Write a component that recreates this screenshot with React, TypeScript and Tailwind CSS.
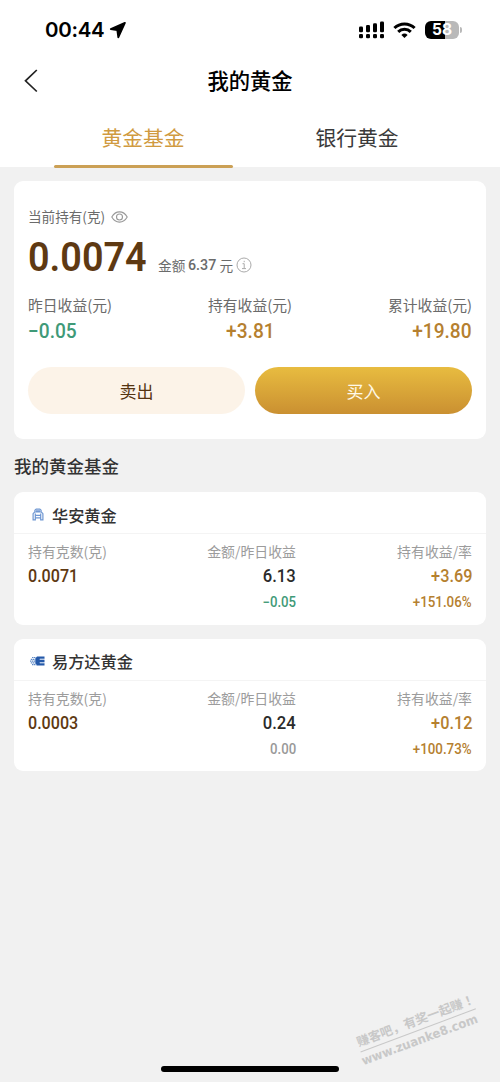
import type { ReactNode } from 'react';

const NUM = "font-['Roboto','Noto_Sans_CJK_SC',sans-serif]";

function StatusBar() {
  return (
    <div className="flex h-[60px] items-center pl-[45px] pr-[38px] text-black">
      <span className="font-['Inter',sans-serif] text-[20.5px] font-semibold leading-none tracking-[-0.3px]">00:44</span>
      <svg className="ml-[5px] h-[18px] w-[18px]" viewBox="0 0 18 18">
        <path d="M15.900 1.800 1.800 8.100 8.300 9.200l1 7.200z" fill="#000" stroke="#000" strokeWidth="1.800" strokeLinejoin="round" />
      </svg>
      <div className="ml-auto flex items-center">
        <svg className="h-[18px] w-[27px]" viewBox="0 0 27 18">
          <rect x="1" y="5.600" width="4" height="5.600" rx="1.300" />
          <rect x="8" y="4" width="4" height="7.200" rx="1.300" />
          <rect x="15" y="2.300" width="4" height="8.900" rx="1.300" />
          <rect x="22" y="0.500" width="4" height="10.700" rx="1.300" />
          <rect x="1" y="13" width="4" height="4.200" rx="1.300" />
          <rect x="8" y="13" width="4" height="4.200" rx="1.300" />
          <rect x="15" y="13" width="4" height="4.200" rx="1.300" />
          <rect x="22" y="13" width="4" height="4.200" rx="1.300" />
        </svg>
        <svg className="ml-2 h-[17px] w-[23px]" viewBox="0 0 23 17" fill="none" stroke="#000" strokeWidth="3">
          <path d="M1.400 6a14.500 14.500 0 0 1 20.200 0" />
          <path d="M5.200 9.900a9 9 0 0 1 12.600 0" />
          <path d="m11.500 16-3.100-3.100a4.500 4.500 0 0 1 6.200 0z" fill="#000" stroke="none" />
        </svg>
        <div className="ml-[9px] flex h-[18px] w-[34px] items-center justify-center rounded-[6px] bg-[linear-gradient(90deg,#000_58%,#b9b9b9_58%)] font-['Inter',sans-serif] text-[15.5px] font-bold leading-none text-white">
          58
        </div>
        <div className="ml-px h-[6px] w-[2px] rounded-r-full bg-[#b9b9b9]" />
      </div>
    </div>
  );
}

function Label({ children, className = '' }: { children: ReactNode; className?: string }) {
  return <div className={`whitespace-nowrap ${className}`}>{children}</div>;
}

function Stat({ label, value, align, color }: { label: string; value: string; align: string; color: string }) {
  return (
    <div className={`flex flex-col ${align}`}>
      <Label className="text-[14.8px] leading-[24px] text-[#6b6b6b]">{label}</Label>
      <div className={`${NUM} scale-x-[0.92] pt-px text-[20.8px] font-medium leading-[27px] ${color}`}>{value}</div>
    </div>
  );
}

function HuaAnLogo() {
  return (
    <svg className="h-[13px] w-[12px]" viewBox="0 0 12 13" fill="none" stroke="#6f97d2" strokeWidth="1.200">
      <path d="M2.900 4V2.300L4.200 1.100h3.600l1.300 1.200V4M4.600 4V2.800h2.800V4M2.600 4h6.800l1.500 1.700v6.200H8.700V9.800H3.300v2.100H1.100V5.700zM3.300 5.500v4.300M8.700 5.500v4.300M3.300 7.300h5.400" />
    </svg>
  );
}

function EFundLogo() {
  return (
    <svg className="h-[10px] w-[15px]" viewBox="0 0 15 10">
      <path d="M7 .5h7.500v2.300H9.800v1.100h4.700v2.200H9.800v1.100h4.700v2.300H7L5.300 7.300V2.500z" fill="#2459a9" />
      <path d="M9.800 3.300h4.700M9.800 6.700h4.700" stroke="#8eabd8" strokeWidth=".8" />
      <path d="M2 1.500h4M.8 3.300h5M0 5.100h6M.8 6.900h5M2 8.700h5" stroke="#5d89c6" strokeWidth="1.200" strokeDasharray="1.400 .5" />
    </svg>
  );
}

interface Fund {
  name: string;
  logo: ReactNode;
  grams: string;
  amount: string;
  daily: string;
  dailyColor: string;
  gain: string;
  rate: string;
}

const funds: Fund[] = [
  { name: '华安黄金', logo: <HuaAnLogo />, grams: '0.0071', amount: '6.13', daily: '−0.05', dailyColor: 'text-[#3f9a78]', gain: '+3.69', rate: '+151.06%' },
  { name: '易方达黄金', logo: <EFundLogo />, grams: '0.0003', amount: '0.24', daily: '0.00', dailyColor: 'text-[#999]', gain: '+0.12', rate: '+100.73%' },
];

function ColumnLabel({ children }: { children: ReactNode }) {
  return (
    <Label className="font-['Noto_Sans_CJK_SC',sans-serif] text-[13.900px] font-normal leading-[22px] text-[#9c9c9c]">{children}</Label>
  );
}

function FundCard({ fund }: { fund: Fund }) {
  return (
    <section className="h-[132.500px] rounded-[9px] bg-white">
      <div className="flex h-[42px] items-center border-b border-[#f4f4f4] pl-[14px] pt-[4px]">
        <div className="flex w-[19px] justify-center">{fund.logo}</div>
        <h3 className="ml-[5px] text-[16.200px] font-medium leading-[24px] text-[#333]">{fund.name}</h3>
      </div>
      <div className={`${NUM} grid grid-cols-[134px_134px_176px] px-[14px] pt-[6px] font-medium`}>
        <div>
          <ColumnLabel>持有克数(克)</ColumnLabel>
          <div className="origin-left scale-x-[0.92] text-[17.500px] leading-[28px] text-[#5e3912]">{fund.grams}</div>
        </div>
        <div className="flex flex-col items-end">
          <ColumnLabel>金额/昨日收益</ColumnLabel>
          <div className="origin-right scale-x-[0.95] text-[17.500px] leading-[28px] text-[#2b2b2b]">{fund.amount}</div>
          <div className={`origin-right scale-x-[0.93] pt-px text-[14.200px] leading-[23px] ${fund.dailyColor}`}>{fund.daily}</div>
        </div>
        <div className="flex flex-col items-end">
          <ColumnLabel>持有收益/率</ColumnLabel>
          <div className="origin-right scale-x-[0.93] text-[17.500px] leading-[28px] text-[#b5802f]">{fund.gain}</div>
          <div className="origin-right scale-x-[0.94] pt-px text-[14.200px] leading-[23px] text-[#b5802f]">{fund.rate}</div>
        </div>
      </div>
    </section>
  );
}

export default function App() {
  return (
    <div className="relative flex h-[1082px] w-[500px] flex-col overflow-hidden bg-[#f1f1f1] font-['Noto_Sans_CJK_SC',sans-serif]">
      <div className="h-[167px] bg-white">
        <StatusBar />
        <header className="grid h-[42px] grid-cols-[100px_1fr_100px] items-center">
          <svg className="ml-[23px] h-[24px] w-[16px]" viewBox="0 0 16 24" fill="none" stroke="#222" strokeWidth="1.700">
            <path d="M13.800 1 2.500 11.800l11.300 10.700" />
          </svg>
          <h1 className="pb-[2px] text-center text-[21.300px] font-medium leading-[32px] text-black">我的黄金</h1>
        </header>
        <nav className="flex h-[66px] justify-center gap-[35px] text-[20.800px]">
          <div className="flex w-[179px] flex-col items-center justify-between text-[#d09a40]">
            <span className="pt-[19px] leading-[32px]">黄金基金</span>
            <span className="h-[3px] w-full rounded-full bg-[#cba055]" />
          </div>
          <div className="flex w-[179px] flex-col items-center text-[#3a3a3a]">
            <span className="pt-[19px] leading-[32px]">银行黄金</span>
          </div>
        </nav>
      </div>

      <main className="px-[14px] pt-[14px]">
        <section className="h-[258px] rounded-[9px] bg-white px-[14px] pt-[24px]">
          <div className="flex items-center">
            <Label className="text-[13.600px] leading-[22px] text-[#6b6b6b]">当前持有(克)</Label>
            <svg className="ml-[6px] mt-px h-[12px] w-[17px]" viewBox="0 0 17 12" fill="none" stroke="#999" strokeWidth="1.100">
              <path d="M.8 6C2.600 2.800 5.300.9 8.500.9S14.400 2.800 16.200 6c-1.800 3.200-4.500 5.100-7.700 5.100S2.600 9.200.8 6z" />
              <circle cx="8.500" cy="6" r="3" />
            </svg>
          </div>
          <div className="flex h-[60px] items-end">
            <div className="w-[130px]">
              <div className={`${NUM} w-fit origin-left scale-x-[0.91] text-[41.500px] font-semibold leading-[60px] text-[#5e3912]`}>0.0074</div>
            </div>
            <div className="flex items-center pb-[11px] text-[13.700px] leading-[22px] text-[#6b6b6b]">
              <span>金额</span>
              <span className={`${NUM} ml-[3px] w-[28px] origin-left scale-x-[0.95] text-[15px] font-medium`}>6.37</span>
              <span className="ml-[3px]">元</span>
              <svg className="ml-[3px] h-[16px] w-[16px]" viewBox="0 0 16 16" fill="none" stroke="#aaa" strokeWidth="1">
                <circle cx="8" cy="8" r="7" />
                <path d="M6.500 6.700h1.700v4.800M6 11.600h4M8.200 3.800v1.400" />
              </svg>
            </div>
          </div>
          <div className="flex justify-between pt-[6px]">
            <Stat label="昨日收益(元)" value="−0.05" align="items-start [&>div:last-child]:origin-left" color="text-[#3f9a78]" />
            <Stat label="持有收益(元)" value="+3.81" align="items-center" color="text-[#b5802f]" />
            <Stat label="累计收益(元)" value="+19.80" align="items-end [&>div:last-child]:origin-right" color="text-[#b5802f]" />
          </div>
          <div className="flex gap-[10px] pt-[22px] text-[17px]">
            <button className="h-[47px] flex-1 rounded-full bg-[#fcf3e8] text-[#553411]">卖出</button>
            <button className="h-[47px] flex-1 rounded-full bg-linear-to-b from-[#e8bc40] to-[#ca9031] text-[#fff9e8]">买入</button>
          </div>
        </section>
        <h2 className="pb-[13px] pt-[13px] text-[17.500px] font-medium leading-[27px] text-[#333]">我的黄金基金</h2>
        <div className="flex flex-col gap-[14px]">
          {funds.map((fund) => (
            <FundCard key={fund.name} fund={fund} />
          ))}
        </div>
      </main>

      <div className="absolute left-[356px] top-[1010px] w-[123px] -rotate-[20.5deg] whitespace-nowrap text-[#c8c8c8]">
        <div className="border-b border-[#c8c8c8] text-[12.500px] font-bold leading-[20px]">
          赚客吧，有奖一起赚<span className="font-['Noto_Sans_CJK_TC',sans-serif]" lang="zh-TW">！</span>
        </div>
        <div className="-ml-[2px] origin-left scale-x-[0.94] pt-px font-['DejaVu_Sans',sans-serif] text-[12.500px] font-bold leading-[15px]">www.zuanke8.com</div>
      </div>
      <div className="absolute bottom-[10px] left-[161px] h-[6px] w-[178px] rounded-full bg-black" />
    </div>
  );
}
